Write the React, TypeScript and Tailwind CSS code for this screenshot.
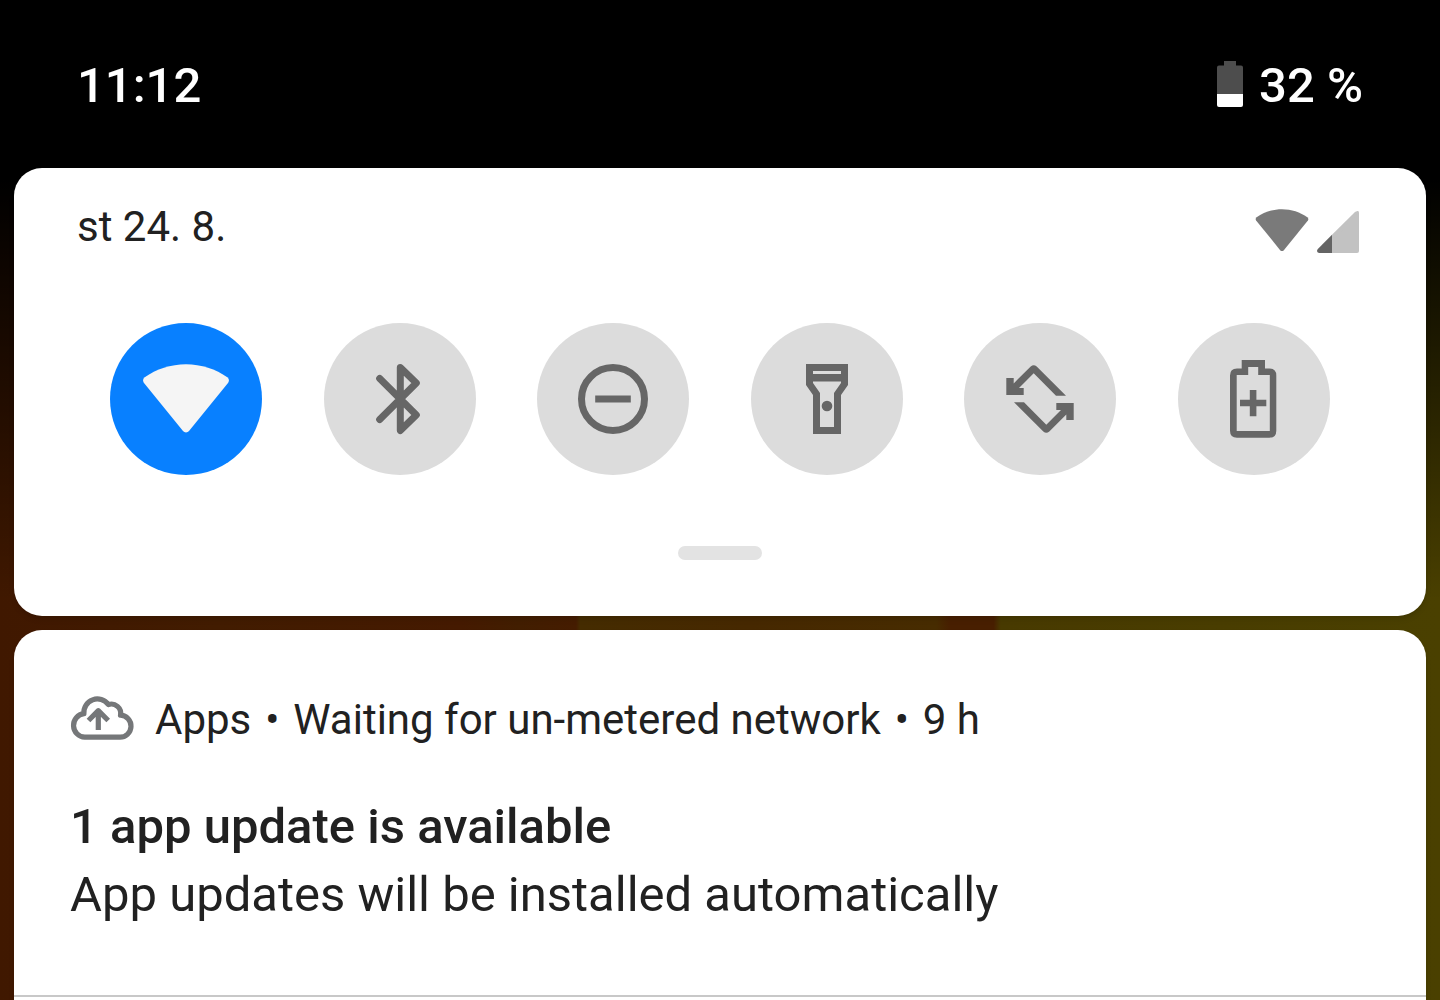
import type { ReactNode } from 'react';

const WifiShape = ({ className }: { className: string }) => (
  <svg viewBox="4 13 88 70" className={className} fill="currentColor" aria-hidden="true">
    <path d="M6.7 26.3C18 18 33 13.2 48 13.2C63 13.2 78 18 89.3 26.3C91.2 27.8 91.4 30 90.2 31.7L51 80C49.4 81.9 46.6 81.9 45 80L5.8 31.7C4.6 30 4.8 27.8 6.7 26.3Z" />
  </svg>
);

const Icon = ({ children }: { children: ReactNode }) => (
  <svg viewBox="0 0 96 96" className="size-24" fill="currentColor" aria-hidden="true">
    {children}
  </svg>
);

const rotateArrow =
  'M14.3 27H21.7V32.4L38.7 15.4Q41.7 12.9 44.7 15.4L74 44.7H64L41.7 22.3L27 37H31.7V44H14.3Z';

const tiles: { label: string; on: boolean; icon: ReactNode }[] = [
  { label: 'Wi-Fi', on: true, icon: <WifiShape className="h-[70px] w-[88px]" /> },
  {
    label: 'Bluetooth',
    on: false,
    icon: (
      <Icon>
        <path
          d="M27.7 27.4L64.3 63.9L48.3 79.6V16.4L64.3 32.1L27.7 68.6"
          fill="none"
          stroke="currentColor"
          strokeWidth="7"
          strokeLinecap="round"
          strokeLinejoin="round"
        />
      </Icon>
    ),
  },
  {
    label: 'Do not disturb',
    on: false,
    icon: (
      <Icon>
        <circle cx="48" cy="48" r="31.5" fill="none" stroke="currentColor" strokeWidth="7" />
        <path d="M30.2 44.5H65.8V51.5H30.2Z" />
      </Icon>
    ),
  },
  {
    label: 'Flashlight',
    on: false,
    icon: (
      <Icon>
        <path
          fillRule="evenodd"
          d="M27 13H69V34L62 44V83H34V44L27 34ZM34 20V23H62V20ZM34 30.5V32L41 42V76H55V42L62 32V30.5Z"
        />
        <circle cx="48" cy="55" r="5.3" />
      </Icon>
    ),
  },
  {
    label: 'Auto-rotate',
    on: false,
    icon: (
      <Icon>
        <path d={rotateArrow} />
        <path d={rotateArrow} transform="rotate(180 48 48)" />
      </Icon>
    ),
  },
  {
    label: 'Battery Saver',
    on: false,
    icon: (
      <Icon>
        <path
          fillRule="evenodd"
          d="M35.7 9H59V17.5H63.3Q70.3 17.5 70.3 24.5V79.7Q70.3 86.7 63.3 86.7H31Q24 86.7 24 79.7V24.5Q24 17.5 31 17.5H35.7ZM42.2 16V24H30.7V80H63.8V24H52.2V16Z"
        />
        <path d="M43.8 39H50.4V48.7H60.3V55.3H50.4V65.2H43.8V55.3H34V48.7H43.8Z" />
      </Icon>
    ),
  },
];

export default function App() {
  return (
    <div className="relative isolate flex min-h-screen flex-col overflow-hidden bg-black font-['Roboto',sans-serif] text-[#212121]">
      <div
        className="absolute inset-0 -z-10 bg-[linear-gradient(to_right,#401800_0%,#421c00_15%,#451a00_32%,#421e00_36%,#451c00_40%,#452c00_40.3%,#462800_52%,#472c00_65%,#481f00_66%,#481f00_69%,#483a00_69.5%,#4a4000_100%)]"
        aria-hidden="true"
      />
      <div
        className="absolute inset-0 -z-10 bg-[linear-gradient(to_bottom,#000_0%,#000_18%,transparent_60%)]"
        aria-hidden="true"
      />

      <header className="flex h-[168px] items-center justify-between px-[77px] text-[49px] leading-[58px] font-medium text-white">
        <time className="pt-1">11:12</time>
        <div className="flex items-center gap-4">
          <svg viewBox="0 0 26 46" className="h-[46px] w-[26px]" aria-hidden="true">
            <path d="M7 0H19V4.5H24Q26 4.5 26 6.5V33H0V6.5Q0 4.5 2 4.5H7Z" fill="#4d4d4d" />
            <path d="M0 33H26V44Q26 46 24 46H2Q0 46 0 44Z" fill="#fff" />
          </svg>
          <span className="pt-1">32 %</span>
        </div>
      </header>

      <main className="flex grow flex-col gap-[14px] px-[14px]">
        <section className="rounded-[28px] bg-white pt-[34px] pb-14 shadow-md" aria-label="Quick settings">
          <div className="flex items-start justify-between pr-[67px] pl-[63px]">
            <span className="text-[42px] leading-[50px]">st 24. 8.</span>
            <div className="flex items-end gap-2 pt-[7px]">
              <WifiShape className="mb-px h-[43px] w-[54px] text-[#7a7a7a]" />
              <svg viewBox="0 0 42 42" className="size-[42px]" aria-hidden="true">
                <path d="M15 26.8L38.6 1Q42 -1.5 42 2V40Q42 42 40 42H15Z" fill="#c2c2c2" />
                <path d="M15 23.8V42H2Q-1.2 41 0.8 38Z" fill="#646464" />
                <path d="M15 23.8L38.5 .6L40 3L15 30Z" fill="#c2c2c2" />
              </svg>
            </div>
          </div>
          <div className="mt-[70px] flex justify-between px-24">
            {tiles.map((tile) => (
              <button
                key={tile.label}
                type="button"
                aria-label={tile.label}
                aria-pressed={tile.on}
                className={
                  tile.on
                    ? 'flex size-[152px] items-center justify-center rounded-full bg-[#0880ff] text-[#f5f5f5]'
                    : 'flex size-[152px] items-center justify-center rounded-full bg-[#dcdcdc] text-[#666]'
                }
              >
                {tile.icon}
              </button>
            ))}
          </div>
          <div className="mx-auto mt-[71px] h-[14px] w-[84px] rounded-full bg-[#e3e3e3]" />
        </section>

        <article className="flex grow flex-col rounded-t-[28px] bg-white pt-[65px] shadow-md">
          <div className="grow px-14">
            <div className="flex items-start text-[42px] leading-[50px]">
              <svg
                viewBox="0 0 64 46"
                className="mr-[21px] h-[46px] w-[64px]"
                fill="none"
                stroke="#757779"
                strokeWidth="5.2"
                strokeLinejoin="round"
                aria-hidden="true"
              >
                <path d="M14.5 42.2A11.8 11.8 0 0 1 13.6 18.7A13.5 13.5 0 0 1 38 9.6A9.3 9.3 0 0 1 50.2 20.2A11 11 0 0 1 49.2 42.2Z" transform="translate(.3 0)" />
                <path d="M28.3 35V16M18.5 25.5L28.3 15.7L38.2 25.5" />
              </svg>
              <span>Apps</span>
              <span className="w-[42px] text-center">•</span>
              <span>Waiting for un-metered network</span>
              <span className="w-[42px] text-center">•</span>
              <time>9 h</time>
            </div>
            <h2 className="mt-[52px] text-[49px] leading-[60px] font-medium">1 app update is available</h2>
            <p className="mt-2 text-[49px] leading-[60px]">App updates will be installed automatically</p>
          </div>
          <div className="mb-[3px] h-[2px] bg-[#c8c8c8]" />
        </article>
      </main>
    </div>
  );
}
